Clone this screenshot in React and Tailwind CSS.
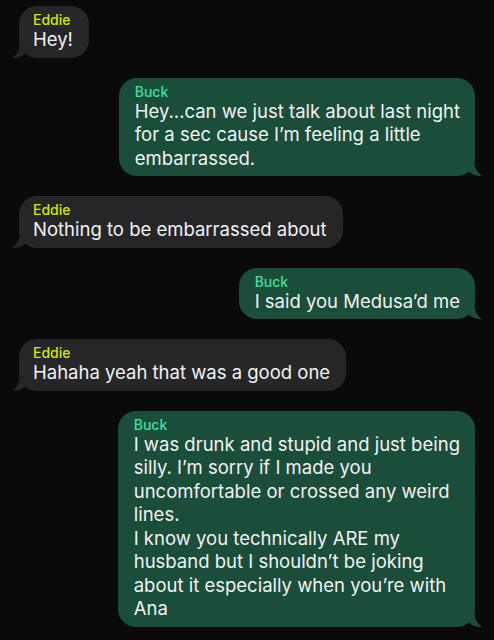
import React from 'react';

const messages = [
  { from: 'Eddie', lines: ['Hey!'] },
  {
    from: 'Buck',
    lines: [
      'Hey...can we just talk about last night',
      'for a sec cause I\u2019m feeling a little',
      'embarrassed.',
    ],
  },
  { from: 'Eddie', lines: ['Nothing to be embarrassed about'] },
  { from: 'Buck', lines: ['I said you Medusa\u2019d me'] },
  { from: 'Eddie', lines: ['Hahaha yeah that was a good one'] },
  {
    from: 'Buck',
    lines: [
      'I was drunk and stupid and just being',
      'silly. I\u2019m sorry if I made you',
      'uncomfortable or crossed any weird',
      'lines.',
      'I know you technically ARE my',
      'husband but I shouldn\u2019t be joking',
      'about it especially when you\u2019re with',
      'Ana',
    ],
  },
];

const Tail = ({ side, color }) => {
  // little curl under the bubble corner
  if (side === 'left') {
    return (
      <svg
        className="absolute bottom-0 -left-[7px]"
        width="20"
        height="20"
        viewBox="0 0 20 20"
      >
        <path d="M8 0 C8 10 6 16 0 20 C6 20 11 18 14 15 L20 15 L20 0 Z" fill={color} />
      </svg>
    );
  }
  return (
    <svg
      className="absolute bottom-0 -right-[7px]"
      width="20"
      height="20"
      viewBox="0 0 20 20"
    >
      <path d="M12 0 C12 10 14 16 20 20 C14 20 9 18 6 15 L0 15 L0 0 Z" fill={color} />
    </svg>
  );
};

const Bubble = ({ from, lines }) => {
  const isBuck = from === 'Buck';
  const color = isBuck ? '#1a4d3a' : '#262628';
  return (
    <div className={`relative ${isBuck ? 'self-end' : 'self-start'}`}>
      <div
        className={`relative z-10 rounded-[18px] pt-[6px] pb-[6px] ${isBuck ? 'bg-[#1a4d3a] pl-4 pr-[15px]' : 'bg-[#262628] pl-[14px] pr-4'}`}
      >
        <div
          className={`text-[14px] leading-4 font-medium ${isBuck ? 'text-[#3fe0a0]' : 'text-[#d2e600]'}`}
        >
          {from}
        </div>
        <div className="text-[18.5px] leading-[23.5px] text-[#f2f2f2] whitespace-nowrap">
          {lines.map((l, i) => (
            <div key={i}>{l}</div>
          ))}
        </div>
      </div>
      <Tail side={isBuck ? 'right' : 'left'} color={color} />
    </div>
  );
};

export default function App() {
  return (
    <div
      className="min-h-[640px] bg-[#0a0a0a] px-[19px] pt-[6px] pb-4 flex flex-col gap-5"
      style={{ fontFamily: 'Inter, "Noto Sans", sans-serif' }}
    >
      {messages.map((m, i) => (
        <Bubble key={i} {...m} />
      ))}
    </div>
  );
}
